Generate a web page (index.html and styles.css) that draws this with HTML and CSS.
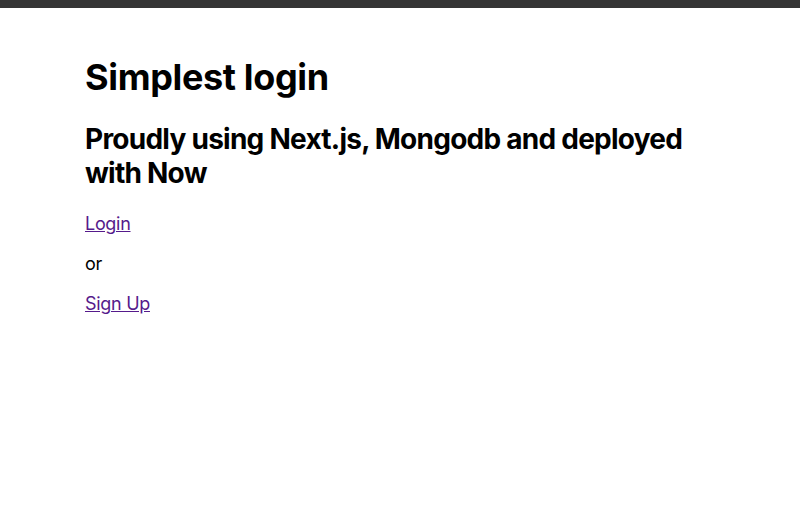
FILE: index.html
```html
<!DOCTYPE html>
<html>
<head>
<meta charset="utf-8">
<link rel="stylesheet" href="styles.css">
</head>
<body>
<div class="topbar"></div>
<main class="container">
  <h1 class="title">Simplest login</h1>
  <h2 class="subtitle">Proudly using Next.js, Mongodb and deployed with Now</h2>
  <p class="line first"><a class="link" href="#login">Login</a></p>
  <p class="line">or</p>
  <p class="line"><a class="link" href="#signup">Sign Up</a></p>
</main>
</body>
</html>
```

FILE: styles.css
```css
html, body {
  margin: 0;
  padding: 0;
  background: #fff;
}
body {
  font-family: Inter, "Noto Sans", sans-serif;
  color: #000;
}
.topbar {
  height: 8px;
  background: #353535;
}
.container {
  width: 630px;
  margin: 0 auto;
  padding-top: 40px;
}
.title {
  font-size: 36px;
  font-weight: 700;
  line-height: 1.2;
  letter-spacing: -0.35px;
  margin: 8px 0 0;
}
.subtitle {
  font-size: 28px;
  font-weight: 700;
  line-height: 1.2;
  letter-spacing: -0.75px;
  margin: 24px 0 0;
}
.line {
  font-size: 18px;
  line-height: 22px;
  letter-spacing: -0.3px;
  margin: 18px 0 0;
}
.line.first {
  margin-top: 23px;
}
.link {
  color: #551a8b;
}
```
